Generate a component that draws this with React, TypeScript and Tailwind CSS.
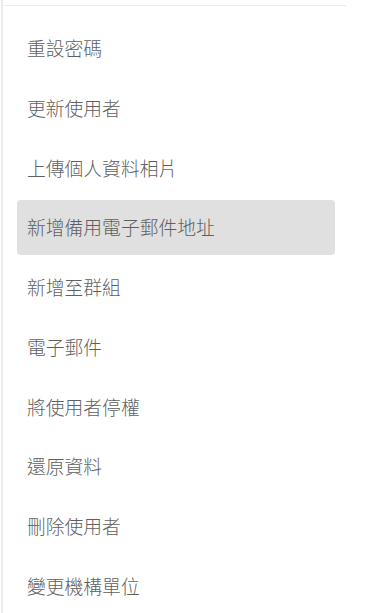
import React from 'react';

const items = [
  '重設密碼',
  '更新使用者',
  '上傳個人資料相片',
  '新增備用電子郵件地址',
  '新增至群組',
  '電子郵件',
  '將使用者停權',
  '還原資料',
  '刪除使用者',
  '變更機構單位',
];

export default function App() {
  const active = 3;
  return (
    <div
      className="min-h-screen bg-white"
      style={{ fontFamily: '"Noto Sans CJK TC", "Noto Sans", sans-serif' }}
    >
      <div className="ml-[1px] min-h-screen w-[346px] border-l-2 border-[#ececec] pt-[5px]">
        <div className="h-[1px] w-[343px] bg-[#ececec]" />
        <ul className="flex flex-col gap-[4.7px] px-[14px] pt-[15px]">
          {items.map((label, i) => (
            <li
              key={label}
              className={`flex h-[55px] w-[318px] items-center rounded-[4px] px-[10px] text-[18.8px] font-light text-[#5f5f5f] ${
                i === active ? 'bg-[#e0e0e0]' : ''
              }`}
            >
              {label}
            </li>
          ))}
        </ul>
      </div>
    </div>
  );
}
